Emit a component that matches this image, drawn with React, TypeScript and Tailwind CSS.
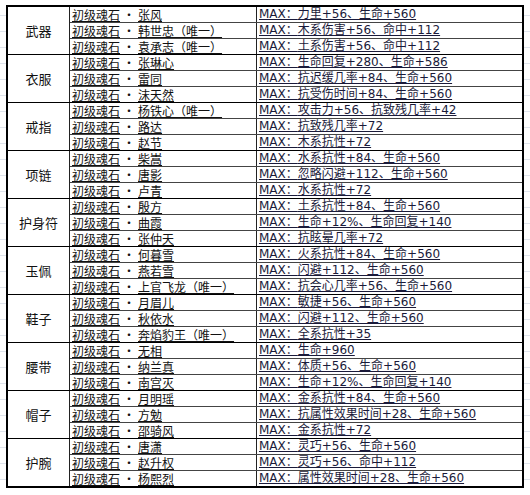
const groups: { cat: string; rows: [string, string][] }[] = [
  {
    cat: "武器",
    rows: [
      ["张风", "力里+56、生命+560"],
      ["韩世忠（唯一）", "木系伤害+56、命中+112"],
      ["袁承志（唯一）", "土系伤害+56、命中+112"],
    ],
  },
  {
    cat: "衣服",
    rows: [
      ["张琳心", "生命回复+280、生命+586"],
      ["雷同", "抗迟缓几率+84、生命+560"],
      ["沫天然", "抗受伤时间+84、生命+560"],
    ],
  },
  {
    cat: "戒指",
    rows: [
      ["杨铁心（唯一）", "攻击力+56、抗致残几率+42"],
      ["路达", "抗致残几率+72"],
      ["赵节", "木系抗性+72"],
    ],
  },
  {
    cat: "项链",
    rows: [
      ["柴嵩", "水系抗性+84、生命+560"],
      ["唐影", "忽略闪避+112、生命+560"],
      ["卢青", "水系抗性+72"],
    ],
  },
  {
    cat: "护身符",
    rows: [
      ["殷方", "土系抗性+84、生命+560"],
      ["曲霞", "生命+12%、生命回复+140"],
      ["张仲天", "抗眩晕几率+72"],
    ],
  },
  {
    cat: "玉佩",
    rows: [
      ["何暮雪", "火系抗性+84、生命+560"],
      ["燕若雪", "闪避+112、生命+560"],
      ["上官飞龙（唯一）", "抗会心几率+56、生命+560"],
    ],
  },
  {
    cat: "鞋子",
    rows: [
      ["月眉儿", "敏捷+56、生命+560"],
      ["秋依水", "闪避+112、生命+560"],
      ["奔焰豹王（唯一）", "全系抗性+35"],
    ],
  },
  {
    cat: "腰带",
    rows: [
      ["无相", "生命+960"],
      ["纳兰真", "体质+56、生命+560"],
      ["南宫灭", "生命+12%、生命回复+140"],
    ],
  },
  {
    cat: "帽子",
    rows: [
      ["月明瑶", "金系抗性+84、生命+560"],
      ["方勉", "抗属性效果时间+28、生命+560"],
      ["邵骑风", "金系抗性+72"],
    ],
  },
  {
    cat: "护腕",
    rows: [
      ["唐潇", "灵巧+56、生命+560"],
      ["赵升权", "灵巧+56、命中+112"],
      ["杨熙烈", "属性效果时间+28、生命+560"],
    ],
  },
]

export default function App() {
  return (
    <div className="w-[530px] h-[495px] bg-white flex overflow-hidden">
      {/* faint sheet gridlines on the left */}
      <div className="w-[6px] h-full bg-[repeating-linear-gradient(to_bottom,transparent_0px,transparent_15px,#dfe4ec_15px,#dfe4ec_16px)]"></div>

      <div className="pt-[5px]">
        <div className="w-[518px] border-2 border-black flex flex-col">
          {groups.map((g, gi) => (
            <div key={g.cat} className={`flex ${gi > 0 ? "border-t border-black" : ""}`}>
              <div
                className="w-[62px] shrink-0 border-r border-[#222] flex items-center justify-center text-[13px] text-[#111]"
                style={{ fontFamily: '"Noto Sans CJK SC", sans-serif' }}
              >
                {g.cat}
              </div>
              <div className="flex-1 flex flex-col">
                {g.rows.map(([name, stat], ri) => (
                  <div key={name} className={`flex h-[15px] ${ri > 0 ? "border-t border-[#444]" : ""}`} style={{ boxSizing: "content-box" }}>
                    <div
                      className="w-[187px] shrink-0 border-r border-[#222] pl-[2px] text-[12px] leading-[15px] text-[#111] whitespace-nowrap overflow-hidden"
                      style={{ fontFamily: '"Noto Sans CJK SC", sans-serif' }}
                    >
                      <span className="underline underline-offset-[1px]">
                        初级魂石<span className="inline-block w-[18px] text-center">·</span>{name}
                      </span>
                    </div>
                    <div
                      className="flex-1 pl-[2px] text-[12px] leading-[15px] text-[#1a1a3a] whitespace-nowrap overflow-hidden"
                      style={{ fontFamily: '"DejaVu Sans", "Noto Sans CJK SC", sans-serif' }}
                    >
                      <span className="underline underline-offset-[1px]">MAX：{stat}</span>
                    </div>
                  </div>
                ))}
              </div>
            </div>
          ))}
        </div>
      </div>

      {/* faint sheet gridlines on the right */}
      <div className="flex-1 h-full bg-[repeating-linear-gradient(to_bottom,transparent_0px,transparent_15px,#dfe4ec_15px,#dfe4ec_16px)]"></div>
    </div>
  )
}
